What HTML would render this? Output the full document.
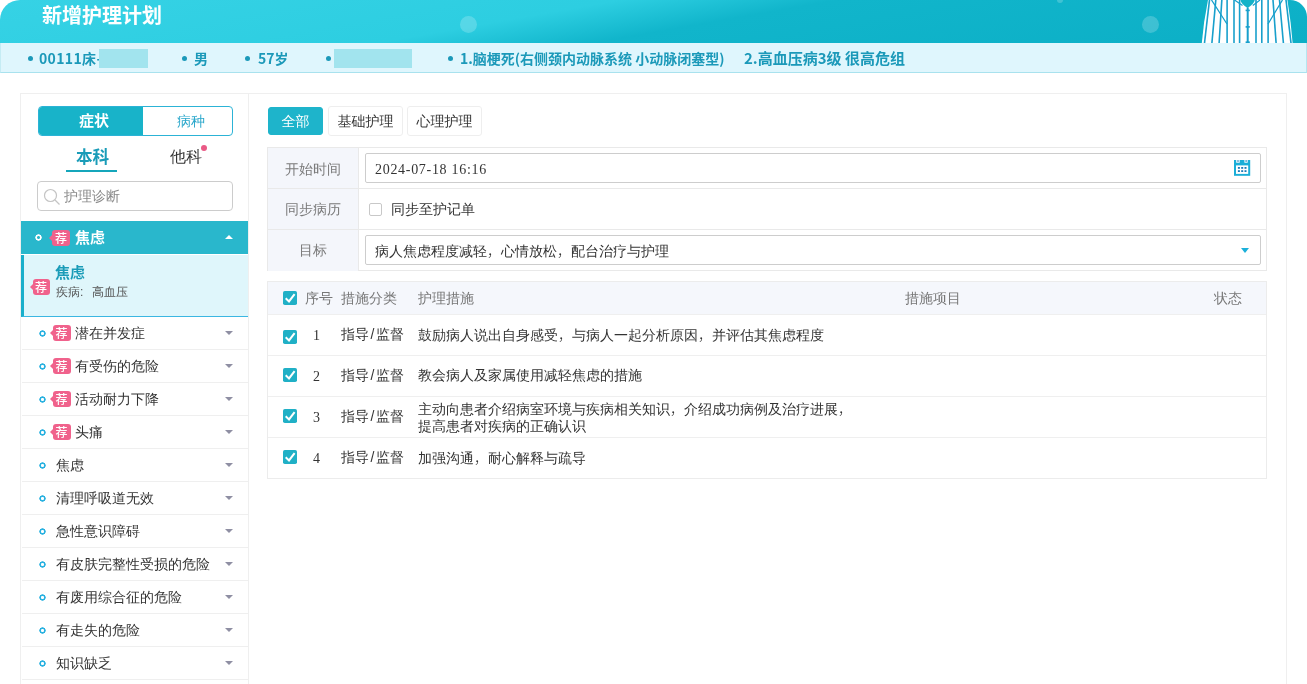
<!DOCTYPE html>
<html lang="zh-CN">
<head>
<meta charset="utf-8">
<title>新增护理计划</title>
<style>
*{box-sizing:border-box;margin:0;padding:0}
html,body{width:1307px;height:684px;overflow:hidden;background:#fff}
body>*{will-change:transform}
body{position:relative;font-family:"Liberation Sans","WenQuanYi Zen Hei",sans-serif;font-size:14px;color:#333}
.abs{position:absolute}
.b{font-family:"Liberation Sans","Noto Sans CJK SC",sans-serif;font-weight:bold}
.n{font-family:"Noto Sans CJK SC","Liberation Sans",sans-serif;font-weight:bold}
/* header */
#hdr{position:absolute;left:0;top:0;width:1307px;height:43px;border-radius:20px 17px 0 0;background:linear-gradient(170deg,#36d2e5 0%,#2dcee1 40%,#11b5cb 54%,#0cafc6 100%);overflow:hidden}
#hdr h1{position:absolute;left:42px;top:2px;font-size:20px;line-height:28px;color:#fff;letter-spacing:0}
.bub{position:absolute;border-radius:50%;background:rgba(255,255,255,.2)}
#info{position:absolute;left:0;top:43px;width:1307px;height:30px;background:#dff6fd;border-bottom:1px solid #a9e2ee;border-right:1px solid #b5e6f0;border-left:1px solid #c5ecf4;color:#1b99b9;font-size:14px;line-height:30px}
#info span{position:absolute;top:0;white-space:nowrap}
#info .dot{position:absolute;top:12.5px;width:5px;height:5px;border-radius:50%;background:#1b99b9}
#info i{position:absolute;top:6px;height:19px;background:#a2e4ee}
/* panel */
#panel{position:absolute;left:20px;top:93px;width:1267px;height:620px;border:1px solid #efefef}
#side{position:absolute;left:21px;top:94px;width:228px;height:600px;border-right:1px solid #efefef}

/* sidebar */
.seg{position:absolute;left:38px;top:106px;width:195px;height:30px;border:1px solid #2cb3d6;border-radius:4px;overflow:hidden;font-size:15px;line-height:28px;text-align:center}
.seg .on{position:absolute;left:0;top:0;width:104px;padding-left:6px;height:28px;background:#18b3c9;color:#fff}
.seg .off{position:absolute;left:104px;top:0;width:89px;height:28px;color:#2aa7cb;font-size:14px;padding-left:7px}
.t1{position:absolute;top:145px;font-size:16px;line-height:22px;white-space:nowrap}
.ul{position:absolute;left:66px;top:170px;width:51px;height:2px;background:#15a6bb}
.rd{position:absolute;left:201px;top:145px;width:6px;height:6px;border-radius:50%;background:#ea5a86}
.srch{padding-left:26px;position:absolute;left:37px;top:181px;width:196px;height:30px;border:1px solid #ccc;border-radius:4px;color:#8a8a8a;font-size:14px;line-height:28px}
.hd{position:absolute;left:21px;top:221px;width:227px;height:33px;background:#29b7cc;color:#fff}
.sub{position:absolute;left:21px;top:255px;width:227px;height:62px;background:#dff6fb;border-left:3px solid #19afcb;border-bottom:1px solid #3bb7e2}
.it{position:absolute;left:22px;width:226px;height:33px;border-bottom:1px solid #efefef;line-height:33px;font-size:14px;color:#333}
.it span{position:absolute;top:0;white-space:nowrap}
.ring{position:absolute;left:16.5px;top:13px;width:7px;height:7px;background:radial-gradient(circle at 50% 50%,#fff 0,#fff 1.3px,#29b1e0 1.7px,#29b1e0 2.9px,rgba(41,177,224,0) 3.4px)}
.bdg{position:absolute;width:18px;height:16px;border-radius:3px;background:#f0628c;color:#fff;font-size:12px;line-height:16px;text-align:center;font-weight:500;font-family:"Noto Sans CJK SC",sans-serif}
.bdg:before{content:"";position:absolute;left:-3px;top:4.5px;border-right:3px solid #f0628c;border-top:3.5px solid transparent;border-bottom:3.5px solid transparent}
.car{position:absolute;left:203px;top:14px;border-top:4px solid #8f8fa3;border-left:4.5px solid transparent;border-right:4.5px solid transparent}

/* main */
.tab{position:absolute;top:106px;height:30px;line-height:28px;text-align:center;font-size:14px;border:1px solid #eee;border-radius:3px;background:#fff;color:#333}
.tab.on{background:#1eb4cb;border-color:#1eb4cb;color:#fff;top:107px;height:28px;line-height:26px}
#form{position:absolute;left:267px;top:147px;width:1000px;height:123.5px;border:1px solid #e9e9e9;background:#fff}
#form .lb{position:absolute;left:0;width:91px;height:41px;background:#f4f6fb;border-right:1px solid #e9e9e9;color:#7a7a7a;text-align:center;line-height:40px}
#form .ln{position:absolute;left:0;width:998px;height:1px;background:#e9e9e9}
.inp{padding-left:9px;position:absolute;left:365px;width:896px;height:30px;border:1px solid #cdcdcd;border-radius:2px;background:#fff;line-height:28px;color:#333;white-space:nowrap}
.num{font-family:"Liberation Serif",serif;letter-spacing:.7px}
.c{font-family:"Noto Sans CJK SC",sans-serif;font-weight:300}
#tb{position:absolute;left:267px;top:281px;width:1000px;height:198px;border:1px solid #ececec;background:#fff}
#tb>span,#tb>svg,#tb .th>span,#tb .th>svg{margin-top:1px}
#tb .th{position:absolute;left:0;top:0;width:998px;height:32px;background:#f5f7fc;color:#777}
#tb .ln{position:absolute;left:0;width:998px;height:1px;background:#efefef}
#tb>span,#tb .th>span{position:absolute;white-space:nowrap;line-height:18px}
.sl{font-style:normal;padding:0 1.5px}
.cb{position:absolute;left:15px}
</style>
</head>
<body>
<div id="hdr">
  <h1 class="b">新增护理计划</h1>
  <div class="bub" style="left:460px;top:16px;width:17px;height:17px"></div>
  <div class="bub" style="left:1142px;top:16px;width:17px;height:17px"></div>
  <div class="bub" style="left:1057px;top:-3px;width:6px;height:6px"></div>
<svg class="abs" style="left:1195px;top:0" width="105" height="43" viewBox="0 0 105 43">
<path d="M13 0 Q8.5 22 6.8 43 L97.6 43 Q96 22 92.4 0 Z" fill="#fff"/>
<g stroke="#18a0cc" stroke-width="1.6" fill="none"><line x1="14.5" y1="0" x2="9.5" y2="43"/><line x1="20.8" y1="0" x2="16.9" y2="43"/><line x1="26.8" y1="0" x2="24.1" y2="43"/><line x1="32.1" y1="0" x2="32.1" y2="43"/><line x1="39.0" y1="0" x2="39.0" y2="43"/><line x1="44.6" y1="0" x2="44.6" y2="43"/><line x1="61.0" y1="0" x2="61.0" y2="43"/><line x1="66.8" y1="0" x2="66.8" y2="43"/><line x1="73.1" y1="0" x2="73.1" y2="43"/><line x1="78.0" y1="0" x2="81.1" y2="43"/><line x1="84.5" y1="0" x2="88.4" y2="43"/><line x1="91.0" y1="0" x2="96.0" y2="43"/>
<path d="M16.5 0 L32 24 M87.5 0 L73 24" stroke-width="1.3"/>
<path d="M39.5 0 L47.5 5.4 M65 0 L57.8 5.4" stroke-width="1.2"/>
</g>
<path d="M45.5 0 Q46 4 52.6 8 Q59 4 59.8 0 Z" fill="#13b3c8"/>
<rect x="51.7" y="7.5" width="2" height="35.5" fill="#18a0cc"/>
<rect x="50.6" y="9.6" width="4.2" height="1.6" fill="#18a0cc"/><rect x="50.6" y="26.1" width="4.2" height="1.6" fill="#18a0cc"/><rect x="50.6" y="41.4" width="4.2" height="1.6" fill="#18a0cc"/>
</svg>
</div>
<div id="info" class="n">
  <b class="dot" style="left:26.5px"></b><span style="left:38px;letter-spacing:.35px">00111床-</span><i style="left:98px;width:49px"></i>
  <b class="dot" style="left:181px"></b><span style="left:193px">男</span>
  <b class="dot" style="left:243.7px"></b><span style="left:257px">57岁</span>
  <b class="dot" style="left:324.5px"></b><i style="left:333px;width:78px"></i>
  <b class="dot" style="left:447px"></b><span style="left:459px">1.脑梗死(右侧颈内动脉系统 小动脉闭塞型)</span>
  <span style="left:743px;font-size:15px">2.高血压病3级 很高危组</span>
</div>
<div id="panel"></div>
<div id="side"></div>
<div class="seg"><div class="on b">症状</div><div class="off">病种</div></div>
<div class="t1 b" style="left:76px;top:146.5px;font-size:16.6px;color:#1a9cb8">本科</div><div class="ul"></div>
<div class="t1" style="left:170px;top:146px;color:#333">他科</div><div class="rd"></div>
<div class="srch">护理诊断
<svg class="abs" style="left:4.5px;top:6px" width="18" height="18" viewBox="0 0 18 18"><circle cx="7.5" cy="7.5" r="6" fill="none" stroke="#c4c4c4" stroke-width="1.2"/><path d="M12 12 L16.5 16.5" stroke="#c4c4c4" stroke-width="1.2"/></svg></div>
<div class="hd"><i class="abs" style="left:13.5px;top:13px;width:7px;height:7px;background:radial-gradient(circle at 50% 50%,rgba(255,255,255,0) 1.2px,#fff 1.7px,#fff 2.9px,rgba(255,255,255,0) 3.4px)"></i><b class="bdg" style="left:31px;top:9px">荐</b><span class="abs b" style="left:54px;top:0;font-size:15px;line-height:33px">焦虑</span><i class="abs" style="left:204px;top:14px;border-bottom:4px solid #fff;border-left:4.5px solid transparent;border-right:4.5px solid transparent"></i></div>
<div class="sub"><b class="bdg" style="left:8.5px;top:24px;width:17px">荐</b><span class="abs b" style="left:31px;top:7px;font-size:15px;line-height:22px;color:#1a9cb8">焦虑</span><span class="abs" style="left:32px;top:28px;font-size:12px;line-height:18px;color:#555">疾病:</span><span class="abs" style="left:68px;top:28px;font-size:12px;line-height:18px;color:#555">高血压</span></div>
<div class="it" style="top:317px"><i class="ring"></i><b class="bdg" style="left:30.5px;top:8px">荐</b><span style="left:53px">潜在并发症</span><i class="car"></i></div>
<div class="it" style="top:350px"><i class="ring"></i><b class="bdg" style="left:30.5px;top:8px">荐</b><span style="left:53px">有受伤的危险</span><i class="car"></i></div>
<div class="it" style="top:383px"><i class="ring"></i><b class="bdg" style="left:30.5px;top:8px">荐</b><span style="left:53px">活动耐力下降</span><i class="car"></i></div>
<div class="it" style="top:416px"><i class="ring"></i><b class="bdg" style="left:30.5px;top:8px">荐</b><span style="left:53px">头痛</span><i class="car"></i></div>
<div class="it" style="top:449px"><i class="ring"></i><span style="left:34px">焦虑</span><i class="car"></i></div>
<div class="it" style="top:482px"><i class="ring"></i><span style="left:34px">清理呼吸道无效</span><i class="car"></i></div>
<div class="it" style="top:515px"><i class="ring"></i><span style="left:34px">急性意识障碍</span><i class="car"></i></div>
<div class="it" style="top:548px"><i class="ring"></i><span style="left:34px">有皮肤完整性受损的危险</span><i class="car"></i></div>
<div class="it" style="top:581px"><i class="ring"></i><span style="left:34px">有废用综合征的危险</span><i class="car"></i></div>
<div class="it" style="top:614px"><i class="ring"></i><span style="left:34px">有走失的危险</span><i class="car"></i></div>
<div class="it" style="top:647px"><i class="ring"></i><span style="left:34px">知识缺乏</span><i class="car"></i></div>
<div class="it" style="top:680px"></div>
<div class="tab on" style="left:268px;width:55px">全部</div><div class="tab" style="left:328px;width:75px">基础护理</div><div class="tab" style="left:407px;width:75px">心理护理</div>
<div id="form"><div class="lb" style="top:0;line-height:43px">开始时间</div><div class="lb" style="top:41px">同步病历</div><div class="lb" style="top:82px">目标</div><div class="ln" style="top:40px"></div><div class="ln" style="top:81px"></div></div>
<div class="inp" style="top:153px"><span class="num" style="position:relative;top:1px">2024-07-18 16:16</span>
<svg class="abs" style="left:868px;top:6px" width="17" height="17" viewBox="0 0 17 17"><rect x="0" y="0" width="16.2" height="15.8" fill="#1baed8"/><rect x="2" y="5.4" width="12.2" height="8.5" fill="#fff"/><rect x="2.2" y="0" width="3.5" height="2.7" fill="#fff"/><rect x="10.4" y="0" width="3.3" height="2.7" fill="#fff"/><g fill="#1c7ab8"><rect x="3.3" y="0.3" width="1.4" height="1.4"/><rect x="11.4" y="0.3" width="1.4" height="1.4"/><rect x="3.9" y="7" width="2" height="1.8"/><rect x="7.2" y="7" width="2" height="1.8"/><rect x="10.5" y="7" width="2" height="1.8"/><rect x="3.9" y="10.2" width="2" height="1.8"/><rect x="7.2" y="10.2" width="2" height="1.8"/><rect x="10.5" y="10.2" width="2" height="1.8"/></g></svg></div>
<i class="abs" style="left:369px;top:203px;width:13px;height:13px;border:1px solid #c8c8c8;border-radius:2px;background:#fff"></i><span class="abs" style="left:391px;top:200px;line-height:18px">同步至护记单</span>
<div class="inp" style="top:235px">病人焦虑程度减轻<span class="c">，</span>心情放松<span class="c">，</span>配台治疗与护理<i class="abs" style="left:875px;top:12px;border-top:5.5px solid #1bb0da;border-left:4.5px solid transparent;border-right:4.5px solid transparent"></i></div>
<div id="tb"><div class="th"><svg class="cb" style="top:8px" width="14" height="14" viewBox="0 0 14 14"><rect width="14" height="14" rx="1.8" fill="#20b0c6"/><path d="M2.7 7.3 L6 10.4 L11.6 3.1" fill="none" stroke="#fff" stroke-width="2" stroke-linejoin="miter"/></svg><span style="left:37px;top:5.5px">序号</span><span style="left:73px;top:5.5px">措施分类</span><span style="left:150px;top:5.5px">护理措施</span><span style="left:637px;top:5.5px">措施项目</span><span style="left:946px;top:5.5px">状态</span></div>
<div class="ln" style="top:32px"></div><svg class="cb" style="top:47px" width="14" height="14" viewBox="0 0 14 14"><rect width="14" height="14" rx="1.8" fill="#20b0c6"/><path d="M2.7 7.3 L6 10.4 L11.6 3.1" fill="none" stroke="#fff" stroke-width="2" stroke-linejoin="miter"/></svg><span class="num" style="left:45px;top:44px">1</span><span style="left:73px;top:42px">指导<i class="sl">/</i>监督</span><span style="left:150px;top:42px">鼓励病人说出自身感受<span class="c">，</span>与病人一起分析原因<span class="c">，</span>并评估其焦虑程度</span>
<div class="ln" style="top:73px"></div><svg class="cb" style="top:85px" width="14" height="14" viewBox="0 0 14 14"><rect width="14" height="14" rx="1.8" fill="#20b0c6"/><path d="M2.7 7.3 L6 10.4 L11.6 3.1" fill="none" stroke="#fff" stroke-width="2" stroke-linejoin="miter"/></svg><span class="num" style="left:45px;top:85px">2</span><span style="left:73px;top:83px">指导<i class="sl">/</i>监督</span><span style="left:150px;top:83px">教会病人及家属使用减轻焦虑的措施</span>
<div class="ln" style="top:114px"></div><svg class="cb" style="top:126px" width="14" height="14" viewBox="0 0 14 14"><rect width="14" height="14" rx="1.8" fill="#20b0c6"/><path d="M2.7 7.3 L6 10.4 L11.6 3.1" fill="none" stroke="#fff" stroke-width="2" stroke-linejoin="miter"/></svg><span class="num" style="left:45px;top:126px">3</span><span style="left:73px;top:124px">指导<i class="sl">/</i>监督</span><span style="left:150px;top:116px">主动向患者介绍病室环境与疾病相关知识<span class="c">，</span>介绍成功病例及治疗进展<span class="c">，</span></span><span style="left:150px;top:134px">提高患者对疾病的正确认识</span>
<div class="ln" style="top:155px"></div><svg class="cb" style="top:167px" width="14" height="14" viewBox="0 0 14 14"><rect width="14" height="14" rx="1.8" fill="#20b0c6"/><path d="M2.7 7.3 L6 10.4 L11.6 3.1" fill="none" stroke="#fff" stroke-width="2" stroke-linejoin="miter"/></svg><span class="num" style="left:45px;top:167px">4</span><span style="left:73px;top:165px">指导<i class="sl">/</i>监督</span><span style="left:150px;top:165px">加强沟通<span class="c">，</span>耐心解释与疏导</span>
</div>
</body>
</html>
